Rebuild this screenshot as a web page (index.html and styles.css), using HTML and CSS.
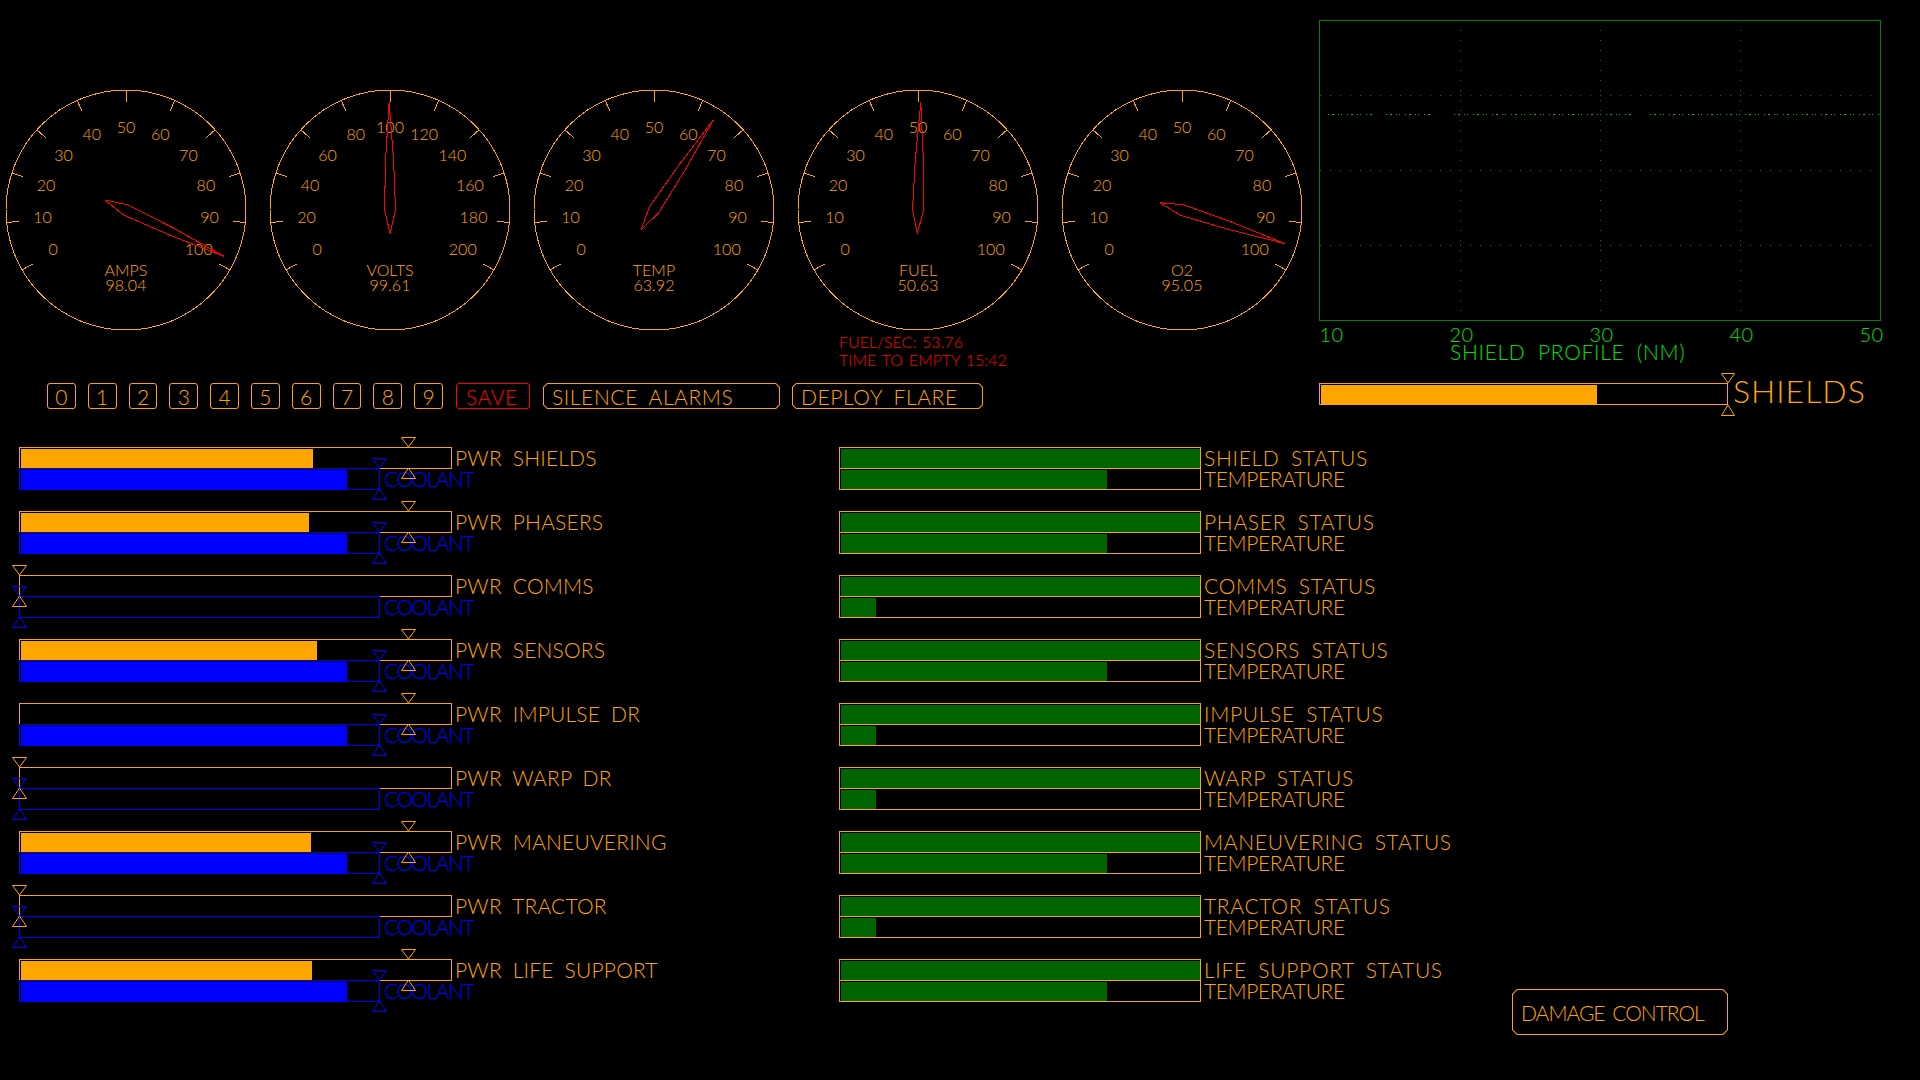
FILE: index.html
```html
<!DOCTYPE html>
<html lang="en">
<head>
<meta charset="utf-8">
<title>Engineering Console</title>
<link rel="stylesheet" href="styles.css">
</head>
<body>
<svg class="defs" width="0" height="0">
  <defs>
    <g id="ticks" stroke="#ffa500" stroke-width="1" shape-rendering="crispEdges">
      <line x1="126" y1="6" x2="126" y2="18" transform="rotate(-120 126 126)"/>
      <line x1="126" y1="6" x2="126" y2="18" transform="rotate(-96 126 126)"/>
      <line x1="126" y1="6" x2="126" y2="18" transform="rotate(-72 126 126)"/>
      <line x1="126" y1="6" x2="126" y2="18" transform="rotate(-48 126 126)"/>
      <line x1="126" y1="6" x2="126" y2="18" transform="rotate(-24 126 126)"/>
      <line x1="126" y1="6" x2="126" y2="18"/>
      <line x1="126" y1="6" x2="126" y2="18" transform="rotate(24 126 126)"/>
      <line x1="126" y1="6" x2="126" y2="18" transform="rotate(48 126 126)"/>
      <line x1="126" y1="6" x2="126" y2="18" transform="rotate(72 126 126)"/>
      <line x1="126" y1="6" x2="126" y2="18" transform="rotate(96 126 126)"/>
      <line x1="126" y1="6" x2="126" y2="18" transform="rotate(120 126 126)"/>
    </g>
    <polygon id="needle" points="126,18 130,76 131.5,126 126,149.5 120.5,126 122,76" fill="none" stroke="#ff0000" stroke-width="1" shape-rendering="crispEdges"/>
  </defs>
</svg>

<div class="top">
  <div class="left-top">
    <div class="gauges">
      <div class="gauge">
        <svg class="dial" width="252" height="252" viewBox="0 0 252 252">
          <circle class="rim" cx="126" cy="126" r="120"/>
          <use href="#ticks"/>
          <text x="53.25" y="170.5">0</text>
          <text x="42.5" y="138.5">10</text>
          <text x="46.1" y="106.5">20</text>
          <text x="63.6" y="76.5">30</text>
          <text x="91.8" y="56">40</text>
          <text x="126" y="48.5">50</text>
          <text x="160.2" y="56">60</text>
          <text x="188.4" y="76.5">70</text>
          <text x="205.9" y="106.5">80</text>
          <text x="209.5" y="138.5">90</text>
          <text x="198.75" y="170.5">100</text>
          <text x="126" y="192">AMPS</text>
          <text x="126" y="207">98.04</text>
          <use href="#needle" transform="rotate(115.3 126 126)"/>
        </svg>
      </div>
      <div class="gauge">
        <svg class="dial" width="252" height="252" viewBox="0 0 252 252">
          <circle class="rim" cx="126" cy="126" r="120"/>
          <use href="#ticks"/>
          <text x="53.25" y="170.5">0</text>
          <text x="42.5" y="138.5">20</text>
          <text x="46.1" y="106.5">40</text>
          <text x="63.6" y="76.5">60</text>
          <text x="91.8" y="56">80</text>
          <text x="126" y="48.5">100</text>
          <text x="160.2" y="56">120</text>
          <text x="188.4" y="76.5">140</text>
          <text x="205.9" y="106.5">160</text>
          <text x="209.5" y="138.5">180</text>
          <text x="198.75" y="170.5">200</text>
          <text x="126" y="192">VOLTS</text>
          <text x="126" y="207">99.61</text>
          <use href="#needle" transform="rotate(-0.47 126 126)"/>
        </svg>
      </div>
      <div class="gauge">
        <svg class="dial" width="252" height="252" viewBox="0 0 252 252">
          <circle class="rim" cx="126" cy="126" r="120"/>
          <use href="#ticks"/>
          <text x="53.25" y="170.5">0</text>
          <text x="42.5" y="138.5">10</text>
          <text x="46.1" y="106.5">20</text>
          <text x="63.6" y="76.5">30</text>
          <text x="91.8" y="56">40</text>
          <text x="126" y="48.5">50</text>
          <text x="160.2" y="56">60</text>
          <text x="188.4" y="76.5">70</text>
          <text x="205.9" y="106.5">80</text>
          <text x="209.5" y="138.5">90</text>
          <text x="198.75" y="170.5">100</text>
          <text x="126" y="192">TEMP</text>
          <text x="126" y="207">63.92</text>
          <use href="#needle" transform="rotate(33.4 126 126)"/>
        </svg>
      </div>
      <div class="gauge">
        <svg class="dial" width="252" height="252" viewBox="0 0 252 252">
          <circle class="rim" cx="126" cy="126" r="120"/>
          <use href="#ticks"/>
          <text x="53.25" y="170.5">0</text>
          <text x="42.5" y="138.5">10</text>
          <text x="46.1" y="106.5">20</text>
          <text x="63.6" y="76.5">30</text>
          <text x="91.8" y="56">40</text>
          <text x="126" y="48.5">50</text>
          <text x="160.2" y="56">60</text>
          <text x="188.4" y="76.5">70</text>
          <text x="205.9" y="106.5">80</text>
          <text x="209.5" y="138.5">90</text>
          <text x="198.75" y="170.5">100</text>
          <text x="126" y="192">FUEL</text>
          <text x="126" y="207">50.63</text>
          <use href="#needle" transform="rotate(1.5 126 126)"/>
        </svg>
        <div class="fuel-info">
          <div>FUEL/SEC: 53.76</div>
          <div>TIME TO EMPTY 15:42</div>
        </div>
      </div>
      <div class="gauge">
        <svg class="dial" width="252" height="252" viewBox="0 0 252 252">
          <circle class="rim" cx="126" cy="126" r="120"/>
          <use href="#ticks"/>
          <text x="53.25" y="170.5">0</text>
          <text x="42.5" y="138.5">10</text>
          <text x="46.1" y="106.5">20</text>
          <text x="63.6" y="76.5">30</text>
          <text x="91.8" y="56">40</text>
          <text x="126" y="48.5">50</text>
          <text x="160.2" y="56">60</text>
          <text x="188.4" y="76.5">70</text>
          <text x="205.9" y="106.5">80</text>
          <text x="209.5" y="138.5">90</text>
          <text x="198.75" y="170.5">100</text>
          <text x="126" y="192">O2</text>
          <text x="126" y="207">95.05</text>
          <use href="#needle" transform="rotate(108.1 126 126)"/>
        </svg>
      </div>
    </div>

    <div class="buttons">
      <div class="btn num">0</div>
      <div class="btn num">1</div>
      <div class="btn num">2</div>
      <div class="btn num">3</div>
      <div class="btn num">4</div>
      <div class="btn num">5</div>
      <div class="btn num">6</div>
      <div class="btn num">7</div>
      <div class="btn num">8</div>
      <div class="btn num">9</div>
      <div class="btn save">SAVE</div>
      <div class="chamfer silence"><span>SILENCE ALARMS</span></div>
      <div class="chamfer flare"><span>DEPLOY FLARE</span></div>
    </div>
  </div>

  <div class="right-top">
    <svg class="chart" width="565" height="345" viewBox="0 0 565 345">
      <g class="grid">
        <line x1="141.5" y1="10" x2="141.5" y2="300"/>
        <line x1="281.5" y1="10" x2="281.5" y2="300"/>
        <line x1="421.5" y1="10" x2="421.5" y2="300"/>
        <line x1="1" y1="75.5" x2="555" y2="75.5"/>
        <line x1="1" y1="150.5" x2="555" y2="150.5"/>
        <line x1="1" y1="225.5" x2="555" y2="225.5"/>
      </g>
      <g class="trace">
        <line x1="9" y1="94.5" x2="56" y2="94.5"/>
        <line x1="67" y1="94.5" x2="112" y2="94.5"/>
        <line x1="135" y1="94.5" x2="316" y2="94.5"/>
        <line x1="331" y1="94.5" x2="563" y2="94.5"/>
      </g>
      <rect class="frame" x="0.5" y="0.5" width="561" height="300"/>
      <text x="12.5" y="322">10</text>
      <text x="142.5" y="322">20</text>
      <text x="282.5" y="322">30</text>
      <text x="422.5" y="322">40</text>
      <text x="552.5" y="322">50</text>
      <text class="title" x="131" y="340">SHIELD PROFILE (NM)</text>
    </svg>
    <div class="shield-row">
      <div class="box obox shield-box"><div class="fill ofill" style="width:276px"></div></div>
      <svg class="shield-mk" width="14" height="43" viewBox="0 0 14 43">
        <polygon points="0.5,0.5 13.5,0.5 7,10"/>
        <polygon points="7,32 13.5,42.5 0.5,42.5"/>
      </svg>
      <div class="shield-label">SHIELDS</div>
    </div>
  </div>
</div>

<div class="lower">
  <div class="rows">
    <div class="row">
      <div class="pwr">
        <div class="line"><div class="box obox"><div class="fill ofill" style="width:292px"></div></div><span class="lbl">PWR SHIELDS</span></div>
        <div class="line"><div class="box bbox"><div class="fill bfill" style="width:326px"></div></div><span class="lbl coolant">COOLANT</span></div>
        <svg class="mk mk-o" style="left:382px" viewBox="0 0 15 64"><polygon points="0.5,0.5 14.5,0.5 7.5,10"/><polygon points="7.5,31 14.5,41.5 0.5,41.5"/></svg>
        <svg class="mk mk-b" style="left:353px" viewBox="0 0 15 64"><polygon points="0.5,21.5 14.5,21.5 7.5,31"/><polygon points="7.5,52 14.5,62.5 0.5,62.5"/></svg>
      </div>
      <div class="status">
        <div class="line"><div class="box sbox"><div class="fill gfill" style="width:359px"></div></div><span class="lbl st">SHIELD STATUS</span></div>
        <div class="line"><div class="box sbox"><div class="fill gfill" style="width:266px"></div></div><span class="lbl temp">TEMPERATURE</span></div>
      </div>
    </div>

    <div class="row">
      <div class="pwr">
        <div class="line"><div class="box obox"><div class="fill ofill" style="width:288px"></div></div><span class="lbl">PWR PHASERS</span></div>
        <div class="line"><div class="box bbox"><div class="fill bfill" style="width:326px"></div></div><span class="lbl coolant">COOLANT</span></div>
        <svg class="mk mk-o" style="left:382px" viewBox="0 0 15 64"><polygon points="0.5,0.5 14.5,0.5 7.5,10"/><polygon points="7.5,31 14.5,41.5 0.5,41.5"/></svg>
        <svg class="mk mk-b" style="left:353px" viewBox="0 0 15 64"><polygon points="0.5,21.5 14.5,21.5 7.5,31"/><polygon points="7.5,52 14.5,62.5 0.5,62.5"/></svg>
      </div>
      <div class="status">
        <div class="line"><div class="box sbox"><div class="fill gfill" style="width:359px"></div></div><span class="lbl st">PHASER STATUS</span></div>
        <div class="line"><div class="box sbox"><div class="fill gfill" style="width:266px"></div></div><span class="lbl temp">TEMPERATURE</span></div>
      </div>
    </div>

    <div class="row">
      <div class="pwr">
        <div class="line"><div class="box obox"></div><span class="lbl">PWR COMMS</span></div>
        <div class="line"><div class="box bbox"></div><span class="lbl coolant">COOLANT</span></div>
        <svg class="mk mk-o" style="left:-7px" viewBox="0 0 15 64"><polygon points="0.5,0.5 14.5,0.5 7.5,10"/><polygon points="7.5,31 14.5,41.5 0.5,41.5"/></svg>
        <svg class="mk mk-b" style="left:-7px" viewBox="0 0 15 64"><polygon points="0.5,21.5 14.5,21.5 7.5,31"/><polygon points="7.5,52 14.5,62.5 0.5,62.5"/></svg>
      </div>
      <div class="status">
        <div class="line"><div class="box sbox"><div class="fill gfill" style="width:359px"></div></div><span class="lbl st">COMMS STATUS</span></div>
        <div class="line"><div class="box sbox"><div class="fill gfill" style="width:35px"></div></div><span class="lbl temp">TEMPERATURE</span></div>
      </div>
    </div>

    <div class="row">
      <div class="pwr">
        <div class="line"><div class="box obox"><div class="fill ofill" style="width:296px"></div></div><span class="lbl">PWR SENSORS</span></div>
        <div class="line"><div class="box bbox"><div class="fill bfill" style="width:326px"></div></div><span class="lbl coolant">COOLANT</span></div>
        <svg class="mk mk-o" style="left:382px" viewBox="0 0 15 64"><polygon points="0.5,0.5 14.5,0.5 7.5,10"/><polygon points="7.5,31 14.5,41.5 0.5,41.5"/></svg>
        <svg class="mk mk-b" style="left:353px" viewBox="0 0 15 64"><polygon points="0.5,21.5 14.5,21.5 7.5,31"/><polygon points="7.5,52 14.5,62.5 0.5,62.5"/></svg>
      </div>
      <div class="status">
        <div class="line"><div class="box sbox"><div class="fill gfill" style="width:359px"></div></div><span class="lbl st">SENSORS STATUS</span></div>
        <div class="line"><div class="box sbox"><div class="fill gfill" style="width:266px"></div></div><span class="lbl temp">TEMPERATURE</span></div>
      </div>
    </div>

    <div class="row">
      <div class="pwr">
        <div class="line"><div class="box obox"></div><span class="lbl">PWR IMPULSE DR</span></div>
        <div class="line"><div class="box bbox"><div class="fill bfill" style="width:326px"></div></div><span class="lbl coolant">COOLANT</span></div>
        <svg class="mk mk-o" style="left:382px" viewBox="0 0 15 64"><polygon points="0.5,0.5 14.5,0.5 7.5,10"/><polygon points="7.5,31 14.5,41.5 0.5,41.5"/></svg>
        <svg class="mk mk-b" style="left:353px" viewBox="0 0 15 64"><polygon points="0.5,21.5 14.5,21.5 7.5,31"/><polygon points="7.5,52 14.5,62.5 0.5,62.5"/></svg>
      </div>
      <div class="status">
        <div class="line"><div class="box sbox"><div class="fill gfill" style="width:359px"></div></div><span class="lbl st">IMPULSE STATUS</span></div>
        <div class="line"><div class="box sbox"><div class="fill gfill" style="width:35px"></div></div><span class="lbl temp">TEMPERATURE</span></div>
      </div>
    </div>

    <div class="row">
      <div class="pwr">
        <div class="line"><div class="box obox"></div><span class="lbl">PWR WARP DR</span></div>
        <div class="line"><div class="box bbox"></div><span class="lbl coolant">COOLANT</span></div>
        <svg class="mk mk-o" style="left:-7px" viewBox="0 0 15 64"><polygon points="0.5,0.5 14.5,0.5 7.5,10"/><polygon points="7.5,31 14.5,41.5 0.5,41.5"/></svg>
        <svg class="mk mk-b" style="left:-7px" viewBox="0 0 15 64"><polygon points="0.5,21.5 14.5,21.5 7.5,31"/><polygon points="7.5,52 14.5,62.5 0.5,62.5"/></svg>
      </div>
      <div class="status">
        <div class="line"><div class="box sbox"><div class="fill gfill" style="width:359px"></div></div><span class="lbl st">WARP STATUS</span></div>
        <div class="line"><div class="box sbox"><div class="fill gfill" style="width:35px"></div></div><span class="lbl temp">TEMPERATURE</span></div>
      </div>
    </div>

    <div class="row">
      <div class="pwr">
        <div class="line"><div class="box obox"><div class="fill ofill" style="width:290px"></div></div><span class="lbl">PWR MANEUVERING</span></div>
        <div class="line"><div class="box bbox"><div class="fill bfill" style="width:326px"></div></div><span class="lbl coolant">COOLANT</span></div>
        <svg class="mk mk-o" style="left:382px" viewBox="0 0 15 64"><polygon points="0.5,0.5 14.5,0.5 7.5,10"/><polygon points="7.5,31 14.5,41.5 0.5,41.5"/></svg>
        <svg class="mk mk-b" style="left:353px" viewBox="0 0 15 64"><polygon points="0.5,21.5 14.5,21.5 7.5,31"/><polygon points="7.5,52 14.5,62.5 0.5,62.5"/></svg>
      </div>
      <div class="status">
        <div class="line"><div class="box sbox"><div class="fill gfill" style="width:359px"></div></div><span class="lbl st">MANEUVERING STATUS</span></div>
        <div class="line"><div class="box sbox"><div class="fill gfill" style="width:266px"></div></div><span class="lbl temp">TEMPERATURE</span></div>
      </div>
    </div>

    <div class="row">
      <div class="pwr">
        <div class="line"><div class="box obox"></div><span class="lbl">PWR TRACTOR</span></div>
        <div class="line"><div class="box bbox"></div><span class="lbl coolant">COOLANT</span></div>
        <svg class="mk mk-o" style="left:-7px" viewBox="0 0 15 64"><polygon points="0.5,0.5 14.5,0.5 7.5,10"/><polygon points="7.5,31 14.5,41.5 0.5,41.5"/></svg>
        <svg class="mk mk-b" style="left:-7px" viewBox="0 0 15 64"><polygon points="0.5,21.5 14.5,21.5 7.5,31"/><polygon points="7.5,52 14.5,62.5 0.5,62.5"/></svg>
      </div>
      <div class="status">
        <div class="line"><div class="box sbox"><div class="fill gfill" style="width:359px"></div></div><span class="lbl st">TRACTOR STATUS</span></div>
        <div class="line"><div class="box sbox"><div class="fill gfill" style="width:35px"></div></div><span class="lbl temp">TEMPERATURE</span></div>
      </div>
    </div>

    <div class="row">
      <div class="pwr">
        <div class="line"><div class="box obox"><div class="fill ofill" style="width:291px"></div></div><span class="lbl">PWR LIFE SUPPORT</span></div>
        <div class="line"><div class="box bbox"><div class="fill bfill" style="width:326px"></div></div><span class="lbl coolant">COOLANT</span></div>
        <svg class="mk mk-o" style="left:382px" viewBox="0 0 15 64"><polygon points="0.5,0.5 14.5,0.5 7.5,10"/><polygon points="7.5,31 14.5,41.5 0.5,41.5"/></svg>
        <svg class="mk mk-b" style="left:353px" viewBox="0 0 15 64"><polygon points="0.5,21.5 14.5,21.5 7.5,31"/><polygon points="7.5,52 14.5,62.5 0.5,62.5"/></svg>
      </div>
      <div class="status">
        <div class="line"><div class="box sbox"><div class="fill gfill" style="width:359px"></div></div><span class="lbl st">LIFE SUPPORT STATUS</span></div>
        <div class="line"><div class="box sbox"><div class="fill gfill" style="width:266px"></div></div><span class="lbl temp">TEMPERATURE</span></div>
      </div>
    </div>
  </div>

  <div class="side">
    <div class="chamfer dmg"><span>DAMAGE CONTROL</span></div>
  </div>
</div>
</body>
</html>
```

FILE: styles.css
```css
* { box-sizing: border-box; }

html, body {
  margin: 0;
  padding: 0;
  background: #000;
}

body {
  width: 1920px;
  height: 1080px;
  overflow: hidden;
  font-family: "Lato", "DejaVu Sans", sans-serif;
  font-weight: 300;
  color: #ffa500;
}

.defs {
  position: absolute;
  width: 0;
  height: 0;
}

/* ---------- top area ---------- */
.top {
  display: flex;
  height: 437px;
}

.left-top {
  width: 1319px;
  flex: none;
}

.gauges {
  display: flex;
  gap: 12px;
  padding-top: 84px;
  align-items: flex-start;
}

.gauge {
  width: 252px;
  flex: none;
}

.dial {
  display: block;
  overflow: visible;
}

.rim {
  fill: none;
  stroke: #ffa500;
  stroke-width: 1;
  shape-rendering: crispEdges;
}

.dial text {
  fill: #ffa500;
  font-family: "Lato", "DejaVu Sans", sans-serif;
  font-weight: 300;
  font-size: 16px;
  text-anchor: middle;
}

.fuel-info {
  margin-top: -3px;
  margin-left: 47px;
  color: #ff0000;
  font-size: 16px;
  line-height: 18px;
  white-space: nowrap;
  letter-spacing: 0;
  word-spacing: 1.5px;
}

/* ---------- buttons ---------- */
.buttons {
  display: flex;
  gap: 12px;
  margin-top: 14px;
  margin-left: 47px;
  height: 26px;
}

.btn {
  height: 26px;
  border: 1px solid #ffa500;
  border-radius: 3px;
  display: flex;
  align-items: center;
  justify-content: center;
  font-size: 21px;
  line-height: 1;
  flex: none;
}

.num {
  width: 28.8px;
}

.save {
  width: 74px;
  margin-left: 1px;
  border-color: #ff0000;
  color: #ff0000;
  justify-content: flex-start;
  padding-left: 9px;
  letter-spacing: 0.5px;
}

.chamfer {
  flex: none;
  height: 26px;
  padding: 1px;
  background: #ffa500;
  clip-path: polygon(4px 0, calc(100% - 4px) 0, 100% 4px, 100% calc(100% - 4px), calc(100% - 4px) 100%, 4px 100%, 0 calc(100% - 4px), 0 4px);
}

.chamfer > span {
  display: flex;
  align-items: center;
  width: 100%;
  height: 100%;
  background: #000;
  padding-left: 8px;
  font-size: 21px;
  line-height: 1;
  white-space: nowrap;
  letter-spacing: 0.6px;
  word-spacing: 5px;
  clip-path: polygon(3.4px 0, calc(100% - 3.4px) 0, 100% 3.4px, 100% calc(100% - 3.4px), calc(100% - 3.4px) 100%, 3.4px 100%, 0 calc(100% - 3.4px), 0 3.4px);
}

.silence {
  width: 237px;
  margin-left: 1px;
}

.flare {
  width: 191px;
}

/* ---------- chart ---------- */
.right-top {
  flex: none;
  width: 601px;
  padding-top: 20px;
}

.chart {
  display: block;
  overflow: visible;
}

.chart .frame {
  fill: none;
  stroke: #008000;
  stroke-width: 1;
  shape-rendering: crispEdges;
}

.chart .grid line {
  stroke: #008000;
  stroke-width: 1;
  stroke-dasharray: 1 9;
  shape-rendering: crispEdges;
}

.chart .trace line {
  stroke: #00c000;
  stroke-width: 1;
  stroke-dasharray: 1 3 2 4 1 2 1 5;
  shape-rendering: crispEdges;
}

.chart text {
  fill: #00e000;
  font-family: "Lato", "DejaVu Sans", sans-serif;
  font-weight: 300;
  font-size: 20px;
  text-anchor: middle;
  letter-spacing: 0.5px;
}

.chart text.title {
  font-size: 21px;
  text-anchor: start;
  letter-spacing: 0.7px;
  word-spacing: 6px;
}

.shield-row {
  position: relative;
  display: flex;
  align-items: flex-start;
  margin-top: 18px;
}

.obox.shield-box {
  width: 409px;
}

.shield-mk {
  position: absolute;
  left: 402px;
  top: -10px;
  fill: none;
  stroke: #ffa500;
  stroke-width: 1;
}

.shield-label {
  margin-left: 5px;
  font-size: 32px;
  line-height: 16px;
  letter-spacing: 1px;
  white-space: nowrap;
}

/* ---------- bars ---------- */
.lower {
  display: flex;
  align-items: flex-start;
}

.rows {
  width: 1512px;
  flex: none;
  padding-left: 19px;
}

.row {
  display: flex;
  height: 64px;
}

.pwr {
  position: relative;
  width: 820px;
  flex: none;
  padding-top: 10px;
}

.status {
  padding-top: 10px;
}

.line {
  display: flex;
  align-items: center;
  height: 22px;
}

.line + .line {
  margin-top: -1px;
}

.box {
  height: 22px;
  border: 1px solid #ffa500;
  padding: 1px 0 0 1px;
  flex: none;
  display: flex;
}

.obox { width: 433px; }

.bbox {
  width: 361px;
  border-color: #0000ff;
  position: relative;
}

.sbox { width: 362px; }

.fill {
  height: 100%;
  flex: none;
}

.ofill { background: #ffa500; }
.bfill { background: #0000ff; }
.gfill { background: #006400; }

.lbl {
  margin-left: 3px;
  font-size: 21px;
  line-height: 22px;
  white-space: nowrap;
  letter-spacing: 0.2px;
  word-spacing: 5px;
}

.lbl.st {
  letter-spacing: 0.7px;
}

.lbl.temp {
  letter-spacing: -0.4px;
}

.lbl.coolant {
  margin-left: 4px;
  color: #0000ff;
  letter-spacing: -1.5px;
}

.mk {
  position: absolute;
  top: 0;
  width: 15px;
  height: 64px;
  fill: none;
  stroke-width: 1;
  overflow: visible;
}

.mk-o { stroke: #ffa500; }
.mk-b { stroke: #0000ff; }

/* ---------- damage control ---------- */
.side {
  padding-top: 552px;
}

.chamfer.dmg {
  width: 216px;
  height: 46px;
  clip-path: polygon(5px 0, calc(100% - 5px) 0, 100% 5px, 100% calc(100% - 5px), calc(100% - 5px) 100%, 5px 100%, 0 calc(100% - 5px), 0 5px);
}

.chamfer.dmg > span {
  font-size: 21px;
  padding-left: 8px;
  letter-spacing: -1px;
  word-spacing: 3px;
  clip-path: polygon(4.4px 0, calc(100% - 4.4px) 0, 100% 4.4px, 100% calc(100% - 4.4px), calc(100% - 4.4px) 100%, 4.4px 100%, 0 calc(100% - 4.4px), 0 4.4px);
}
```
